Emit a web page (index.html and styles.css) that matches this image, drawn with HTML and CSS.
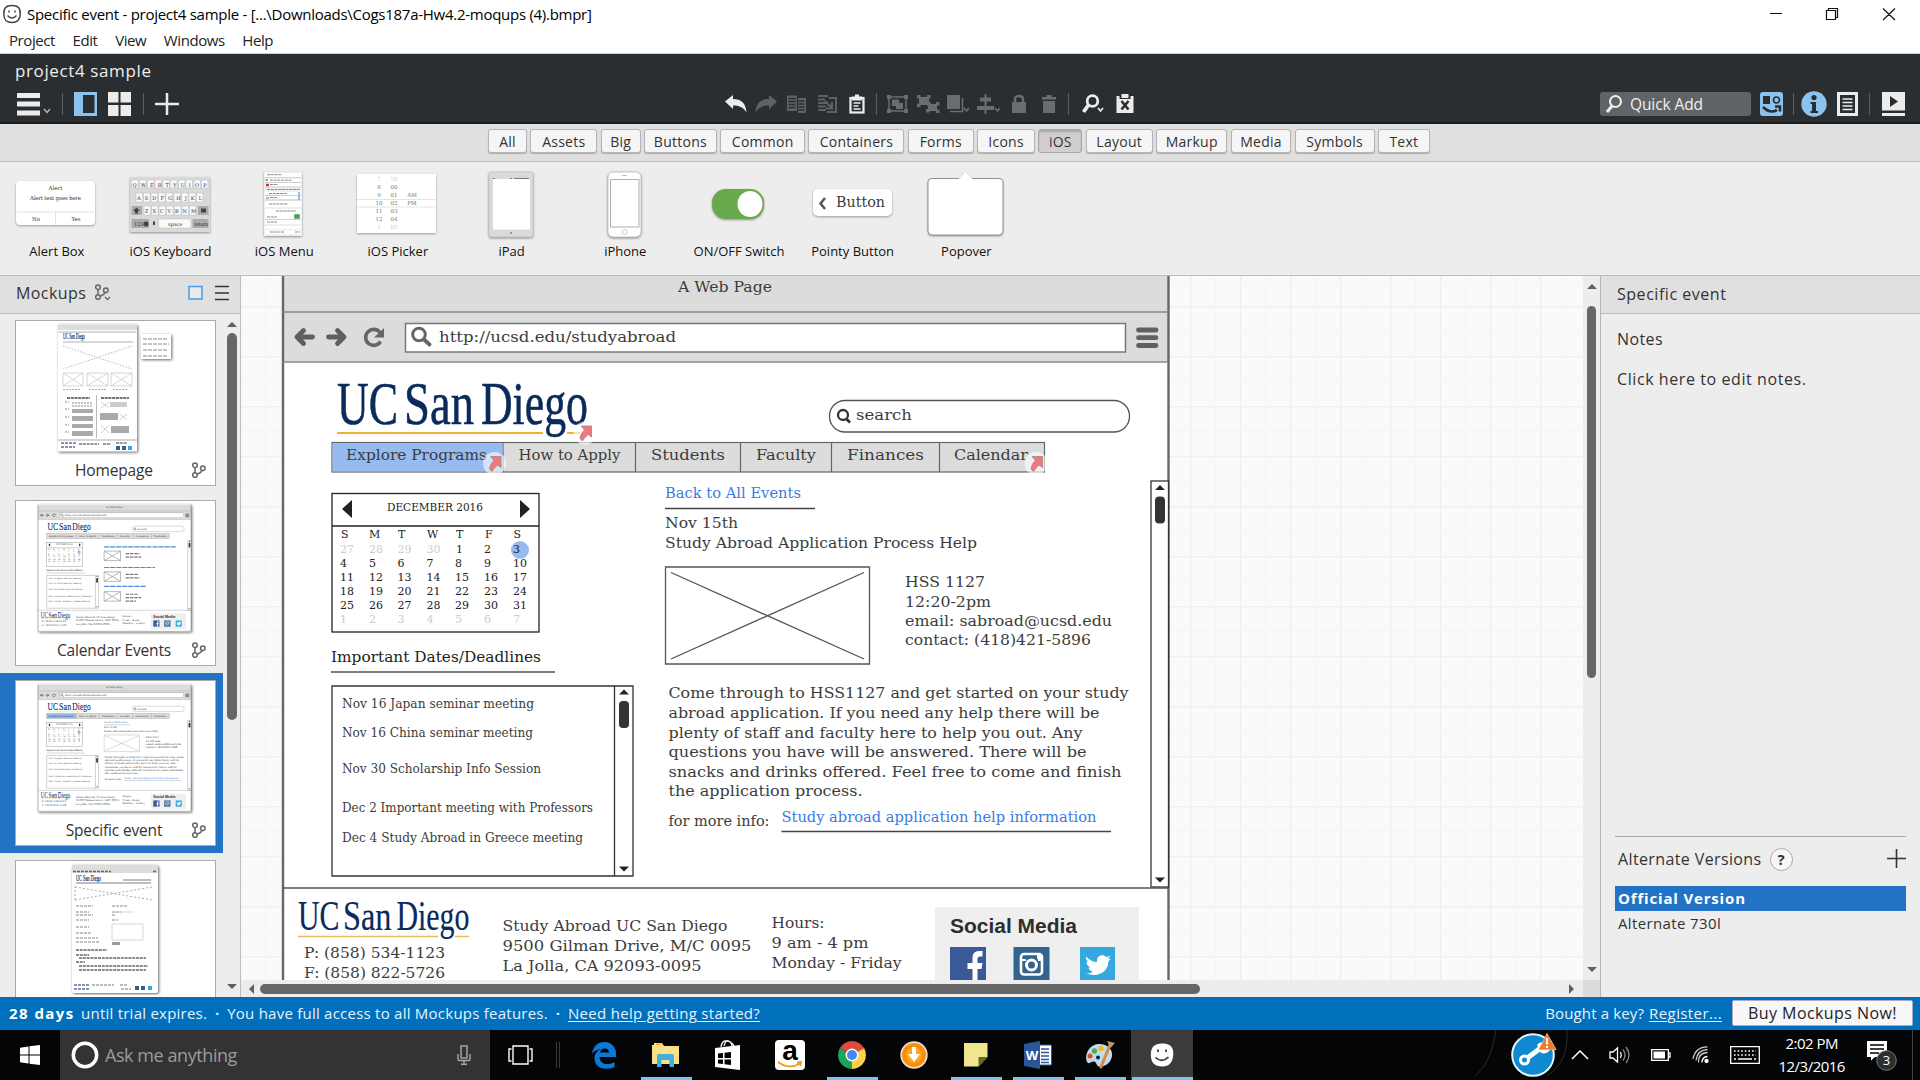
FILE: index.html
```
<!DOCTYPE html>
<html lang="en">
<head>
<meta charset="utf-8">
<title>Specific event - project4 sample</title>
<link rel="stylesheet" href="styles.css">
</head>
<body>
<svg class="defs" width="0" height="0">
  <defs>
    <g id="branch" fill="none" stroke="#666" stroke-width="1.5">
      <circle cx="4" cy="3.2" r="2.3"/><circle cx="4" cy="13" r="2.3"/><circle cx="11.8" cy="6.3" r="2.3"/><path d="M4 5.5v5.2M11 8.600C10 11 8 11.500 6.400 12.200"/>
    </g>
    <g id="hotlink">
      <circle r="11.500" fill="#fff" opacity=".6"/>
      <path d="M-4-7H6.500V4L3 1.500C1 4-1 5 -2.500 8L-5 5.500C-4.500 2-3-1-.5-3Z" fill="#f17878" stroke="#a88" stroke-width=".9"/>
    </g>
    <g id="browser">
      <rect x="282" y="275" width="887" height="736" fill="#fff"/>
      <rect x="282" y="275" width="887" height="87" fill="#dcdcdc"/>
      <path d="M283 275V1010H1168.500V275" fill="none" stroke="#666" stroke-width="2.400"/>
      <path d="M283 312H1168M283 362H1168" stroke="#888" stroke-width="1.600"/>
      <text class="slab" x="678" y="293" textLength="94" lengthAdjust="spacingAndGlyphs">A Web Page</text>
      <g stroke="#5f5f5f" stroke-width="4.800" fill="none" stroke-linecap="round" stroke-linejoin="round">
        <path d="M312.500 337H298M303.500 330.500 297 337 303.500 343.500"/><path d="M328.500 337H343M337.500 330.500 344 337 337.500 343.500"/>
      </g>
      <path d="M380 332.500A8 8 0 1 0 380.500 341.500" fill="none" stroke="#666" stroke-width="3.600"/><path d="M384 328V337.500H374Z" fill="#666"/>
      <rect x="405.500" y="323.500" width="720" height="28.500" fill="#fff" stroke="#777" stroke-width="1.500"/>
      <circle cx="419" cy="334.500" r="6.300" fill="none" stroke="#666" stroke-width="3"/><path d="M424 339.500 429.500 344.500" stroke="#666" stroke-width="3.800" stroke-linecap="round"/>
      <text class="slab" x="439" y="343" textLength="237" lengthAdjust="spacingAndGlyphs">http://ucsd.edu/studyabroad</text>
      <path d="M1138.500 330H1156M1138.500 337.700H1156M1138.500 345.500H1156" stroke="#606060" stroke-width="4.800" stroke-linecap="round"/>
      <g class="logo">
        <text x="337" y="423.500" textLength="61" lengthAdjust="spacingAndGlyphs">UC</text>
        <text x="404" y="423.500" textLength="70" lengthAdjust="spacingAndGlyphs">San</text>
        <text x="481" y="423.500" textLength="107" lengthAdjust="spacingAndGlyphs">Diego</text>
      </g>
      <path d="M337 433H543M567 433H580" stroke="#efb236" stroke-width="2"/>
      <rect x="829.500" y="400.500" width="300" height="31.500" rx="15.500" fill="#fff" stroke="#555" stroke-width="1.300"/>
      <circle cx="843" cy="415" r="5" fill="none" stroke="#333" stroke-width="2.300"/><path d="M846.500 419 850 422.500" stroke="#333" stroke-width="2.800"/>
      <text class="slab" x="856" y="420.500" textLength="56" lengthAdjust="spacingAndGlyphs">search</text>
      <rect x="332" y="442.500" width="712.500" height="29.500" fill="#dcdcdc" stroke="#666" stroke-width="1.200"/>
      <path d="M503 442V472M635.500 442V472M740.500 442V472M831.500 442V472M939.500 442V472" stroke="#666" stroke-width="1.200"/>
      <rect x="332" y="493.500" width="207" height="138.500" fill="#fff" stroke="#222" stroke-width="1.300"/><path d="M332 526H539" stroke="#222" stroke-width="1.300"/>
      <path d="M352 500V518L342 509ZM520 500V518L530 509Z" fill="#222"/>
      <text class="slab cal-title" x="387" y="511.500" textLength="96" lengthAdjust="spacingAndGlyphs">DECEMBER 2016</text>
      <circle cx="520" cy="550" r="9" fill="#95bbf0"/>
      <g class="slab cal">
        <text y="538.500"><tspan x="341">S</tspan><tspan x="369">M</tspan><tspan x="398">T</tspan><tspan x="427">W</tspan><tspan x="456">T</tspan><tspan x="485">F</tspan><tspan x="513.500">S</tspan></text>
        <text y="553.500"><tspan class="off" x="340">27</tspan><tspan class="off" x="369">28</tspan><tspan class="off" x="397.500">29</tspan><tspan class="off" x="426.500">30</tspan><tspan x="456">1</tspan><tspan x="484">2</tspan><tspan x="513">3</tspan></text>
        <text y="567.500"><tspan x="340">4</tspan><tspan x="369">5</tspan><tspan x="397.500">6</tspan><tspan x="426.500">7</tspan><tspan x="455">8</tspan><tspan x="484">9</tspan><tspan x="513">10</tspan></text>
        <text y="581.500"><tspan x="340">11</tspan><tspan x="369">12</tspan><tspan x="397.500">13</tspan><tspan x="426.500">14</tspan><tspan x="455">15</tspan><tspan x="484">16</tspan><tspan x="513">17</tspan></text>
        <text y="595.500"><tspan x="340">18</tspan><tspan x="369">19</tspan><tspan x="397.500">20</tspan><tspan x="426.500">21</tspan><tspan x="455">22</tspan><tspan x="484">23</tspan><tspan x="513">24</tspan></text>
        <text y="609.500"><tspan x="340">25</tspan><tspan x="369">26</tspan><tspan x="397.500">27</tspan><tspan x="426.500">28</tspan><tspan x="455">29</tspan><tspan x="484">30</tspan><tspan x="513">31</tspan></text>
        <text y="624" class="off"><tspan x="340">1</tspan><tspan x="369">2</tspan><tspan x="397.500">3</tspan><tspan x="426.500">4</tspan><tspan x="455">5</tspan><tspan x="484">6</tspan><tspan x="513">7</tspan></text>
      </g>
      <text class="slab dark" x="331" y="662.500" textLength="210" lengthAdjust="spacingAndGlyphs">Important Dates/Deadlines</text>
      <path d="M331 672H555" stroke="#555" stroke-width="1.400"/>
      <path d="M332 686H633V876H332ZM614.500 686V876" fill="#fff" stroke="#333" stroke-width="1.300"/>
      <path d="M619 694.500H629L624 689.500ZM619 866.500H629L624 871.500Z" fill="#222"/><rect x="619" y="701" width="10" height="27" rx="4" fill="#333"/>
      <g class="slab small">
        <text x="342" y="709" textLength="192" lengthAdjust="spacingAndGlyphs">Nov 16 Japan seminar meeting</text>
        <text x="342" y="738" textLength="191" lengthAdjust="spacingAndGlyphs">Nov 16 China seminar meeting</text>
        <text x="342" y="774" textLength="199" lengthAdjust="spacingAndGlyphs">Nov 30 Scholarship Info Session</text>
        <text x="342" y="813" textLength="251" lengthAdjust="spacingAndGlyphs">Dec 2 Important meeting with Professors</text>
        <text x="342" y="843" textLength="241" lengthAdjust="spacingAndGlyphs">Dec 4 Study Abroad in Greece meeting</text>
      </g>
      <rect x="1151" y="481" width="17.500" height="406" fill="#fff" stroke="#333" stroke-width="1.300"/>
      <path d="M1155 490H1165L1160 485ZM1155 877.500H1165L1160 882.500Z" fill="#222"/><rect x="1155" y="496.500" width="10" height="27" rx="4" fill="#333"/>
      <path d="M283 888H1168" stroke="#555" stroke-width="1.400"/>
      <g class="logo logo-small">
        <text x="298" y="930" textLength="41.500" lengthAdjust="spacingAndGlyphs">UC</text>
        <text x="343" y="930" textLength="48.500" lengthAdjust="spacingAndGlyphs">San</text>
        <text x="396.500" y="930" textLength="73" lengthAdjust="spacingAndGlyphs">Diego</text>
      </g>
      <path d="M298 936.500H438M455 936.500H469" stroke="#e3c05c" stroke-width="1.600"/>
      <g class="slab">
        <text x="304" y="959" textLength="141" lengthAdjust="spacingAndGlyphs">P: (858) 534-1123</text>
        <text x="304" y="979" textLength="141" lengthAdjust="spacingAndGlyphs">F: (858) 822-5726</text>
        <text x="502.500" y="931.500" textLength="225" lengthAdjust="spacingAndGlyphs">Study Abroad UC San Diego</text>
        <text x="502.500" y="951.500" textLength="249" lengthAdjust="spacingAndGlyphs">9500 Gilman Drive, M/C 0095</text>
        <text x="502.500" y="971.500" textLength="199" lengthAdjust="spacingAndGlyphs">La Jolla, CA 92093-0095</text>
        <text x="771.500" y="929" textLength="53" lengthAdjust="spacingAndGlyphs">Hours:</text>
        <text x="771.500" y="949" textLength="97" lengthAdjust="spacingAndGlyphs">9 am - 4 pm</text>
        <text x="771.500" y="969" textLength="130" lengthAdjust="spacingAndGlyphs">Monday - Friday</text>
      </g>
      <rect x="935" y="907" width="204" height="91" fill="#efefef"/>
      <text class="social" x="950" y="932.500" textLength="127" lengthAdjust="spacingAndGlyphs">Social Media</text>
      <rect x="950" y="947" width="36" height="36" fill="#3b5998"/><path d="M972.500 983V969H967.500V963H972.500V958Q972.500 951 979 951H982.500V956.500H980Q977.500 956.500 977.500 959V963H982.500L981.500 969H977.500V983Z" fill="#fff"/>
      <rect x="1013.500" y="947" width="36" height="36" fill="#33648f"/><rect x="1021" y="954" width="21" height="20.500" rx="3" fill="none" stroke="#fff" stroke-width="2.600"/><circle cx="1031.500" cy="965" r="5" fill="none" stroke="#fff" stroke-width="3"/><path d="M1022 960H1026M1038 960H1042" stroke="#fff" stroke-width="2"/><rect x="1037" y="955" width="4" height="4" fill="#fff"/>
      <rect x="1080" y="947" width="35" height="36" fill="#35a8e0"/><path d="M1086 956.500C1089 960 1093 962 1097 962C1096 956 1103 953 1106 957C1108 957 1109 956 1110.500 955.500L1108 959 1111 958.500 1108.300 961.500C1108.500 971 1099 978 1086 973.500C1089 973.500 1091.500 973 1093 971.500C1090 971 1089 969.500 1088.500 967.500H1090.500C1087.500 966 1086.500 964 1086.500 961.500L1088.500 962C1086 960 1085.500 958.500 1086 956.500Z" fill="#fff"/>
    </g>
    <g id="nav">
      <text x="346" y="461" textLength="141" lengthAdjust="spacingAndGlyphs">Explore Programs</text>
      <text x="518.500" y="461" textLength="102" lengthAdjust="spacingAndGlyphs">How to Apply</text>
      <text x="651" y="461" textLength="74" lengthAdjust="spacingAndGlyphs">Students</text>
      <text x="756" y="461" textLength="60" lengthAdjust="spacingAndGlyphs">Faculty</text>
      <text x="847" y="461" textLength="77" lengthAdjust="spacingAndGlyphs">Finances</text>
      <text x="954" y="461" textLength="74" lengthAdjust="spacingAndGlyphs">Calendar</text>
    </g>
    <g id="event">
      <rect x="332.600" y="443.100" width="170" height="28.300" fill="#95bbf0"/>
      <use href="#nav" class="slab"/>
      <text class="slab link" x="665" y="499" textLength="136" lengthAdjust="spacingAndGlyphs">Back to All Events</text>
      <path d="M665 508.500H815M781.500 831.500H1111" stroke="#444" stroke-width="1.300"/>
      <g class="slab">
        <text x="665" y="529" textLength="73" lengthAdjust="spacingAndGlyphs">Nov 15th</text>
        <text x="665" y="549" textLength="312" lengthAdjust="spacingAndGlyphs">Study Abroad Application Process Help</text>
        <text x="905" y="588" textLength="80" lengthAdjust="spacingAndGlyphs">HSS 1127</text>
        <text x="905" y="608" textLength="86" lengthAdjust="spacingAndGlyphs">12:20-2pm</text>
        <text x="905" y="627" textLength="207" lengthAdjust="spacingAndGlyphs">email: sabroad@ucsd.edu</text>
        <text x="905" y="646" textLength="186" lengthAdjust="spacingAndGlyphs">contact: (418)421-5896</text>
        <text x="668.500" y="699" textLength="460" lengthAdjust="spacingAndGlyphs">Come through to HSS1127 and get started on your study</text>
        <text x="668.500" y="719" textLength="431" lengthAdjust="spacingAndGlyphs">abroad application. If you need any help there will be</text>
        <text x="668.500" y="739" textLength="414" lengthAdjust="spacingAndGlyphs">plenty of staff and faculty here to help you out. Any</text>
        <text x="668.500" y="758" textLength="418" lengthAdjust="spacingAndGlyphs">questions you have will be answered. There will be</text>
        <text x="668.500" y="778" textLength="453" lengthAdjust="spacingAndGlyphs">snacks and drinks offered. Feel free to come and finish</text>
        <text x="668.500" y="797" textLength="194" lengthAdjust="spacingAndGlyphs">the application process.</text>
        <text x="668.500" y="827" textLength="101" lengthAdjust="spacingAndGlyphs">for more info:</text>
      </g>
      <text class="slab link" x="781.500" y="823" textLength="315" lengthAdjust="spacingAndGlyphs">Study abroad application help information</text>
      <path d="M665.500 567H869.500V664H665.500ZM671 572.500 864 659M671 659 864 572.500" fill="none" stroke="#555" stroke-width="1.300"/>
    </g>
  </defs>
</svg>

<div class="app">
  <header class="titlebar">
    <svg width="20" height="20" viewBox="0 0 20 20" fill="none" stroke="#444" stroke-width="1.500"><path d="M10 1.500C16 1.500 18.500 4 18.300 10 18.100 16 15.500 18.500 10 18.500 4 18.500 2 16 1.800 10 1.600 4 4 1.500 10 1.500Z"/><path d="M5.500 11.500Q10 16.500 14.500 11.500M7 6.500V8.500M13 6.500V8.500"/></svg>
    <span class="window-title">Specific event - project4 sample - [...\Downloads\Cogs187a-Hw4.2-moqups (4).bmpr]</span>
    <svg class="window-buttons" width="136" height="28" viewBox="0 0 136 28" fill="none" stroke="#111" stroke-width="1.200"><path d="M5 13.500H17M61.500 10.500H70.500V19.500H61.500ZM63.500 10V8.500H72.500V17.500H70.500M118 8.500 130 20M130 8.500 118 20"/></svg>
  </header>
  <nav class="menubar"><span>Project</span><span>Edit</span><span>View</span><span>Windows</span><span>Help</span></nav>

  <section class="toolbar">
    <div class="project-name">project4 sample</div>
    <div class="tools">
      <div class="tools-left">
        <svg width="46" height="26" viewBox="0 0 46 26" fill="#ececec"><path d="M1 2H24V7H1ZM1 10.500H24V15.500H1ZM1 19.500H24V24.500H1Z"/><path d="M28 18 31 21.500 34 18" fill="none" stroke="#bbb" stroke-width="1.300"/></svg>
        <i class="sep"></i>
        <svg width="23" height="24" viewBox="0 0 23 24"><path d="M0 0H23V24H0Z" fill="#8cc2ee"/><path d="M9 3H20.500V21H9Z" fill="#2a2e30"/></svg>
        <svg width="24" height="24" viewBox="0 0 24 24" fill="#ececec"><path d="M0 0H10.500V10.500H0ZM12.500 0H23V10.500H12.500ZM0 13H10.500V24H0ZM12.500 13H23V24H12.500Z"/></svg>
        <i class="sep"></i>
        <svg width="24" height="24" viewBox="0 0 24 24" stroke="#ececec" stroke-width="2.500"><path d="M12 1V23M0 12H24"/></svg>
      </div>
      <div class="tools-edit">
        <span class="tool"><svg width="24" height="20" viewBox="0 0 24 20" fill="#ececec"><path d="M1 7.500 9 1V5C17 5 22 9 22.500 18.500 19 13 15 11.500 9 11.500V15Z"/></svg></span>
        <span class="tool"><svg width="24" height="20" viewBox="0 0 24 20" fill="#5f6263"><path d="M23 7.500 15 1V5C7 5 2 9 1.500 18.500 5 13 9 11.500 15 11.500V15Z"/></svg></span>
        <span class="tool"><svg width="21" height="20" viewBox="0 0 21 20"><path d="M1 1.500H11V17H1Z M11 4H20V19H11Z" fill="#5f6263"/><path d="M2.500 4.500H9.500M2.500 7.500H9.500M2.500 10.500H9.500M2.500 13.500H9.500M12.500 7H18.500M12.500 10H18.500M12.500 13H18.500M12.500 16H18.500M11.500 2V19" stroke="#2a2e30" stroke-width="1.300"/></svg></span>
        <span class="tool"><svg width="21" height="20" viewBox="0 0 21 20" fill="none" stroke="#5f6263" stroke-width="2"><path d="M1 2H11M1 5.500H8M1 9H9M1 12.500H9M1 16H9M12 4H19V18H10M8 7 15 14M15 8V14.500H9"/></svg></span>
        <span class="tool"><svg width="18" height="20" viewBox="0 0 18 20" fill="none" stroke="#ececec"><rect x="2.500" y="4" width="13" height="14.500" stroke-width="2.200"/><path d="M5 3.500H13V5.500H5ZM7 1.500H11" stroke-width="2"/><path d="M5.500 9H12.500M5.500 12H10.500M5.500 15H12.500" stroke-width="1.500"/></svg></span>
        <i class="sep"></i>
        <span class="tool"><svg width="23" height="20" viewBox="0 0 23 20" fill="#6a6d6e"><path d="M1 1H5V5H1ZM18 1H22V5H18ZM1 15H5V19H1ZM18 15H22V19H18Z"/><path d="M3 3H20V17H3Z" fill="none" stroke="#6a6d6e" stroke-width="1.500"/><path d="M6 5.500H13V12H6ZM10 9H17V15H10Z"/></svg></span>
        <span class="tool"><svg width="24" height="20" viewBox="0 0 24 20" fill="#6a6d6e"><path d="M3 3H13V11H3ZM12 10H21V17H12Z"/><path d="M1 1H4.500V4.500H1ZM11 1H14.500V4.500H11ZM1 9.500H4.500V13H1ZM11 8H14.500V12H11ZM20 8H23.500V11.500H20ZM20 15.500H23.500V19H20ZM10 15H13.500V18.500H10Z"/></svg></span>
        <span class="tool"><svg width="26" height="20" viewBox="0 0 26 20" fill="#6a6d6e"><path d="M2 1H15V15H2Z"/><path d="M17.500 4V17.500H5M19 14 21.500 17 24 14" fill="none" stroke="#6a6d6e" stroke-width="1.600"/></svg></span>
        <span class="tool"><svg width="26" height="20" viewBox="0 0 26 20" fill="#6a6d6e"><path d="M8.500 0H10.500V20H8.500ZM4 3.500H15V7.500H4ZM1 12H18V16H1Z"/><path d="M19 14 21.500 17 24 14" fill="none" stroke="#6a6d6e" stroke-width="1.600"/></svg></span>
        <span class="tool"><svg width="16" height="20" viewBox="0 0 16 20" fill="#6a6d6e"><path d="M1 8H15V19H1Z"/><path d="M4 9V5Q4 2 8 2 12 2 12 5V9" fill="none" stroke="#6a6d6e" stroke-width="2.500"/></svg></span>
        <span class="tool"><svg width="16" height="20" viewBox="0 0 16 20" fill="#6a6d6e"><path d="M1 3H5.500V1H10.500V3H15V5.500H1ZM2 7H14V19H2Z"/></svg></span>
        <i class="sep"></i>
        <span class="tool tool-search"><svg width="24" height="20" viewBox="0 0 24 20" fill="none" stroke="#ececec"><circle cx="11.500" cy="7" r="5.300" stroke-width="2.800"/><path d="M7.500 11 2.500 18" stroke-width="3.800"/><path d="M17 14 19.500 17 22 14" stroke-width="1.600"/></svg></span>
        <span class="tool tool-clear"><svg width="20" height="20" viewBox="0 0 20 20"><path d="M1.500 2H18.500V19H1.500Z" fill="#ececec"/><path d="M4.500 0H15.500V5H4.500Z" fill="#2a2e30"/><path d="M6.500 0H13.500V4H6.500Z" fill="#ececec"/><path d="M6.500 7 13.500 15.500M13.500 7 6.500 15.500" stroke="#2a2e30" stroke-width="2.600"/></svg></span>
      </div>
      <div class="tools-right">
        <div class="quick-add"><svg width="18" height="20" viewBox="0 0 18 20" fill="none" stroke="#f0f0f0"><circle cx="10.500" cy="7.500" r="5.500" stroke-width="2"/><path d="M7 12 2 18" stroke-width="3"/></svg><span>Quick Add</span></div>
        <svg class="ui-library" width="23" height="24" viewBox="0 0 23 24"><rect width="23" height="24" rx="3" fill="#8cc2ee"/><path d="M3 4H10V12H3Z" fill="#2a2e30"/><circle cx="16.500" cy="8" r="3" fill="none" stroke="#2a2e30" stroke-width="1.600"/><path d="M3 15Q10 22 17 18M15 14.500H20V19.500" fill="none" stroke="#2a2e30" stroke-width="2.600"/></svg>
        <i class="sep"></i>
        <svg width="26" height="26" viewBox="0 0 26 26"><circle cx="13" cy="13" r="12.700" fill="#8cc2ee"/><circle cx="13" cy="6.500" r="2.600" fill="#2a2e30"/><path d="M9.500 11H15V20H17V22H9.500V20H11V13H9.500Z" fill="#2a2e30"/></svg>
        <svg class="notes-icon" width="22" height="24" viewBox="0 0 22 24"><path d="M0 0H21V24H0Z" fill="#ececec"/><path d="M3 3H18V21H3Z" fill="#2a2e30"/><path d="M5.500 7H15.500M5.500 10.500H15.500M5.500 14H15.500M5.500 17.500H15.500" stroke="#ececec" stroke-width="1.700"/></svg>
        <i class="sep"></i>
        <svg width="23" height="24" viewBox="0 0 23 24"><path d="M0 0H23V18.500H0ZM0 21H23V24H0Z" fill="#ececec"/><path d="M8 4V15L16 9.500Z" fill="#2a2e30"/></svg>
      </div>
    </div>
  </section>

  <nav class="tabs">
    <button class="tab w-all">All</button><button class="tab w-assets">Assets</button><button class="tab w-big">Big</button><button class="tab w-buttons">Buttons</button><button class="tab w-common">Common</button><button class="tab w-containers">Containers</button><button class="tab w-forms">Forms</button><button class="tab w-icons">Icons</button><button class="tab w-ios active">iOS</button><button class="tab w-layout">Layout</button><button class="tab w-markup">Markup</button><button class="tab w-media">Media</button><button class="tab w-symbols">Symbols</button><button class="tab w-text">Text</button>
  </nav>

  <section class="library">
    <figure><svg width="82" height="74" viewBox="0 0 82 74"><rect class="soft" x="1" y="13" width="79" height="44" rx="4"/><path d="M2 44H79M40.500 44V57" stroke="#e2e2e2"/><g class="micro" text-anchor="middle"><text x="40.500" y="21.500">Alert</text><text x="40.500" y="32" textLength="51">Alert text goes here</text><text x="21" y="53">No</text><text x="61" y="53">Yes</text></g></svg><figcaption>Alert Box</figcaption></figure>
    <figure><svg width="82" height="74" viewBox="0 0 82 74"><rect x="1" y="9" width="80" height="55" fill="#d9d9d9" class="lift"/><g fill="#fafafa" stroke="#bbb" stroke-width=".5"><path d="M2.500 12h6.500v8h-6.500zM10.500 12h6.500v8h-6.500zM18.500 12h6.500v8h-6.500zM26 12h6.500v8h-6.500zM34 12h6.500v8h-6.500zM41.500 12h6.500v8h-6.500zM49.500 12h6.500v8h-6.500zM57 12h6.500v8h-6.500zM65 12h6.500v8h-6.500zM72.500 12h6.500v8h-6.500zM7 25h6.500v9h-6.500zM14.500 25h6.500v9h-6.500zM22 25h6.500v9h-6.500zM29.500 25h6.500v9h-6.500zM37 25h6.500v9h-6.500zM45 25h6.500v9h-6.500zM52.500 25h6.500v9h-6.500zM60 25h6.500v9h-6.500zM67.500 25h6.500v9h-6.500zM15 38h6.500v9h-6.500zM22.500 38h6.500v9h-6.500zM30 38h6.500v9h-6.500zM37.500 38h6.500v9h-6.500zM45.500 38h6.500v9h-6.500zM53 38h6.500v9h-6.500zM60.500 38h6.500v9h-6.500zM29.500 51H62V60H29.500Z"/></g><path d="M2.500 38H13V47H2.500ZM69 38H79.500V47H69ZM2.500 51H20V60H2.500ZM63.500 51H79.500V60H63.500Z" fill="#aaa"/><g class="micro key"><text x="3.500" y="18.500" textLength="74">QWERTYUIOP</text><text x="8" y="31.500" textLength="65">ASDFGHJKL</text><text x="16" y="44.500" textLength="51">ZXCVBNM</text><text x="5" y="57.500">123</text><text x="39" y="57.500">space</text><text x="65" y="57.500" textLength="14">return</text></g><path d="M7.500 39.500 11 43H9V45.500H6V43H4ZM72 40.500H77V44.500H72Z" fill="#444"/><circle cx="17" cy="56" r="2.500" fill="#444"/><path d="M24 53.500H26V57H24Z" fill="#444"/></svg><figcaption>iOS Keyboard</figcaption></figure>
    <figure><svg width="82" height="74" viewBox="0 0 82 74"><rect x="22" y="4" width="38" height="64" fill="#f0f0f0" class="lift"/><path d="M23 5H59V9H23ZM23 10.500H59V14H23ZM23 15H59V18.500H23ZM23 24H59V27H23ZM23 28H59V31H23ZM23 33H59V39H23ZM23 41H59V56H23ZM23 58H59V61H23ZM23 62.500H59V66H23Z" fill="#fff"/><path d="M25 6.700H40M28 12.200H50M28 16.500H36M25 21.500H58M27 25.500H45M28 29.500H36M27 36H46M34 43H54M25 49H35M25 54H35M28 64H42M53 64H58" stroke="#888" stroke-width="1" stroke-dasharray="3 .7"/><path d="M23.500 12H26M53 47H57V50H53Z" stroke="#40a050" fill="#58a050" stroke-width="1.500"/><path d="M24 17H27" stroke="#d03030" stroke-width="2.500"/><path d="M24 30H27M57 24V32" stroke="#2878c8" stroke-width="1"/><path d="M23 9.700H59M23 14.500H59M23 19H59M23 27.500H59M23 32H59M23 51.500H59" stroke="#bbb" stroke-width=".7"/></svg><figcaption>iOS Menu</figcaption></figure>
    <figure><svg width="82" height="74" viewBox="0 0 82 74"><rect x="1" y="6" width="79" height="59" class="soft"/><path d="M1 31.500H80M1 39H80" stroke="#ddd" stroke-width=".8"/><g class="micro picker" text-anchor="middle"><text x="23" y="21">8</text><text x="38" y="21">00</text><text x="23" y="29">9</text><text x="38" y="29">01</text><text x="56" y="29">AM</text><text x="23" y="37">10</text><text x="38" y="37">02</text><text x="56" y="37">PM</text><text x="23" y="45">11</text><text x="38" y="45">03</text><text x="23" y="53">12</text><text x="38" y="53">04</text><g opacity=".4"><text x="23" y="61">1</text><text x="38" y="61">05</text><text x="23" y="13">7</text><text x="38" y="13">59</text></g></g></svg><figcaption>iOS Picker</figcaption></figure>
    <figure><svg width="82" height="74" viewBox="0 0 82 74"><rect x="19" y="4" width="44" height="65" rx="2" fill="#dadada" stroke="#c4c4c4" stroke-width=".7" class="lift"/><path d="M23 11H60V61.500H23Z" fill="#fff"/><path d="M23 10.500H60" stroke="#777" stroke-dasharray="2 15 2"/><circle cx="41" cy="65" r="1" fill="#888"/></svg><figcaption>iPad</figcaption></figure>
    <figure><svg width="82" height="74" viewBox="0 0 82 74"><rect x="25" y="4" width="33" height="65" rx="5" fill="#fff" stroke="#bbb" stroke-width=".8" class="lift"/><path d="M27.500 11.500H56V59H27.500Z" fill="#fff" stroke="#999" stroke-width=".8"/><circle cx="41.500" cy="64" r="2.500" fill="none" stroke="#ccc"/><path d="M39 7.500H44" stroke="#bbb"/></svg><figcaption>iPhone</figcaption></figure>
    <figure><svg width="82" height="74" viewBox="0 0 82 74"><rect x="15" y="21" width="52" height="30" rx="14" fill="#69a94e" class="lift"/><ellipse cx="53" cy="36" rx="12.500" ry="13" fill="#fff"/></svg><figcaption>ON/OFF Switch</figcaption></figure>
    <figure><svg width="82" height="74" viewBox="0 0 82 74"><rect x="2" y="21" width="79" height="27" rx="5" class="soft"/><path d="M14 30 9.500 35.500 14 41" fill="none" stroke="#555" stroke-width="2.500"/><text class="slab pointy" x="25" y="39.500" textLength="49" lengthAdjust="spacingAndGlyphs">Button</text></svg><figcaption>Pointy Button</figcaption></figure>
    <figure><svg width="82" height="74" viewBox="0 0 82 74"><g transform="translate(1)"><path d="M7 10.500H34L40.500 4 47 10.500H74Q78 10.500 78 14V63Q78 67 74 67H7Q3 67 3 63V14Q3 10.500 7 10.500Z" fill="#fff" class="lift"/><path d="M34 10.500H7Q3 10.500 3 14V63Q3 67 7 67H74Q78 67 78 63V14Q78 10.500 74 10.500H47" fill="none" stroke="#888" stroke-width=".9"/></g></svg><figcaption>Popover</figcaption></figure>
  </section>

  <main class="workspace">
    <aside class="mockups">
      <div class="mockups-head"><span>Mockups</span>
        <svg width="18" height="18" viewBox="0 0 18 18"><use href="#branch"/><path d="M11 13 13.500 15.500 16 13" fill="none" stroke="#666" stroke-width="1.300"/></svg>
        <svg class="view-icons" width="42" height="18" viewBox="0 0 42 18" fill="none"><path d="M2 2.500H15V15H2Z" fill="#e6ebf0" stroke="#4a9be0" stroke-width="1.500"/><path d="M28 2.500H42M28 9H42M28 15.500H42" stroke="#333" stroke-width="1.500"/></svg>
      </div>
      <div class="mockups-body">
        <div class="card-list">
          <div class="slot"><div class="card">
            <svg class="thumb" width="199" height="134" viewBox="1 0 199 134">
              <rect x="43" y="3.500" width="79" height="127" fill="#fff" class="lift2"/><path d="M43 3.500H122V9H43Z" fill="#ddd"/><path d="M43.500 11H121M48 21H118" stroke="#ccc" stroke-width="1.500"/>
              <text class="logo tiny-logo" x="48" y="18" textLength="22" lengthAdjust="spacingAndGlyphs">UC San Diego</text>
              <path d="M48 25 117 48M117 25 48 48" stroke="#bbb" stroke-dasharray="1.500 1.500" fill="none"/>
              <path d="M48 52H68V65H48ZM72 52H93V65H72ZM96 52H117V65H96ZM48 52 68 65M68 52 48 65M72 52 93 65M93 52 72 65M96 52 117 65M117 52 96 65" fill="none" stroke="#ccc" stroke-width=".8"/>
              <path d="M48 68.500H66M74 68.500H91M98 68.500H112" stroke="#aaa" stroke-dasharray="2 1"/><path d="M52 77H75M86 77H114" stroke="#444" stroke-width="1.500" stroke-dasharray="3 .7"/><path d="M81.500 74V117" stroke="#bbb"/>
              <path d="M50 81H54M50 88H54M50 96H54M50 104H54M50 111H54M57 82H77M57 85H77" stroke="#888" stroke-dasharray="2 1"/><path d="M57 88H78V92H57ZM57 95H78V100H57ZM57 103H78V107H57ZM57 110H78V115H57ZM85 92H103V99H85ZM96 105H114V112H96Z" fill="#aaa"/><path d="M95 81H112V86H95Z" fill="#ccc"/><path d="M86 81 94 87M94 81 86 87M105 93 112 99M112 93 105 99M86 104 94 112M94 104 86 112" stroke="#bbb" stroke-width=".7"/>
              <path d="M43 119H122" stroke="#888" stroke-width=".7"/><path d="M46 122H61M46 126H60" stroke="#5b70a0" stroke-width="1.500" stroke-dasharray="3 1"/><path d="M64 123H84M88 123H96M101 122H112" stroke="#777" stroke-width="1.600" stroke-dasharray="3 .8"/><path d="M101 125H105V129H101Z" fill="#3b5998"/><path d="M107 125H111V129H107Z" fill="#33648f"/><path d="M113 125H117V129H113Z" fill="#35a8e0"/>
              <rect x="126" y="13" width="30" height="25" fill="#fff" class="lift2"/><path d="M128 18H152M128 23H154M128 29H152M128 35H153" stroke="#888" stroke-dasharray="4 1"/>
            </svg>
            <div class="card-label"><span>Homepage</span><svg width="16" height="17" viewBox="0 0 16 17"><use href="#branch"/></svg></div>
          </div></div>
          <div class="slot"><div class="card">
            <svg class="thumb" width="199" height="134" viewBox="1 0 199 134">
              <rect x="23" y="3.500" width="153" height="127" fill="#fff" class="lift2"/>
              <g transform="translate(-25.600 -43.900) scale(.1725)"><use href="#browser"/><use href="#nav" class="slab"/><g stroke="#4a88dc" stroke-width="7" stroke-dasharray="30 5"><path d="M665 520H1080M665 640H960M665 750H905"/></g><path d="M665 545H760V600H665ZL760 600M760 545 665 600M665 665H760V720H665ZL760 720M760 665 665 720M665 780H760V835H665ZL760 835M760 780 665 835" fill="none" stroke="#999" stroke-width="4"/><path d="M790 560H870M790 580H880M790 680H860M790 700H870M790 795H860M790 815H880M790 835H850" stroke="#777" stroke-width="7" stroke-dasharray="20 5"/></g>
            </svg>
            <div class="card-label"><span>Calendar Events</span><svg width="16" height="17" viewBox="0 0 16 17"><use href="#branch"/></svg></div>
          </div></div>
          <div class="slot selected"><div class="card">
            <svg class="thumb" width="199" height="134" viewBox="1 0 199 134">
              <rect x="23" y="3.500" width="153" height="127" fill="#fff" class="lift2"/>
              <g transform="translate(-25.600 -43.900) scale(.1725)"><use href="#browser"/><use href="#event"/></g>
            </svg>
            <div class="card-label"><span>Specific event</span><svg width="16" height="17" viewBox="0 0 16 17"><use href="#branch"/></svg></div>
          </div></div>
          <div class="slot"><div class="card">
            <svg class="thumb" width="199" height="134" viewBox="1 0 199 134">
              <rect x="57" y="4" width="86" height="128" rx="2" fill="#fff" class="lift2"/><path d="M57 4H143V12H57Z" fill="#ddd"/><path d="M58 10.500H96M138 10.500H141" stroke="#666" stroke-width="1.500" stroke-dasharray="3 1"/>
              <text class="logo tiny-logo" x="61" y="19.500" textLength="25" lengthAdjust="spacingAndGlyphs">UC San Diego</text><path d="M61 22H136M108 19H136" stroke="#aaa" stroke-width="1.500"/>
              <path d="M60 25V39M60 26 137 39M137 26 60 39" stroke="#aaa" stroke-dasharray="2 2" fill="none"/>
              <path d="M61 45H78M61 51H74M61 54H78M61 59H74M61 66H74M61 72H76M61 77H83M61 81H85M97 45H112M97 51H106M97 54H101M97 59H103" stroke="#888" stroke-width="1.200" stroke-dasharray="3 1"/><path d="M97 63H128V79H97ZM97 51H119" fill="none" stroke="#ccc" stroke-width=".8"/><path d="M97 81H105V84H97Z" fill="#999"/>
              <path d="M61 89H92M61 94H74M64 97H131M61 101H70M64 105H133M64 109H131" stroke="#666" stroke-width="1.400" stroke-dasharray="3 .8"/>
              <path d="M59 124H75M59 128H74" stroke="#5b70a0" stroke-width="1.500" stroke-dasharray="3 1"/><path d="M77 124H99M105 124H112M106 128H116" stroke="#777" stroke-dasharray="3 1"/><path d="M120 125H124V129H120Z" fill="#3b5998"/><path d="M126 125H130V129H126Z" fill="#33648f"/><path d="M133 125H137V129H133Z" fill="#35a8e0"/>
            </svg>
          </div></div>
        </div>
        <div class="vscroll"><i class="arrow up"></i><i class="bar bar-mockups"></i><i class="arrow down"></i></div>
      </div>
    </aside>

    <section class="canvas">
      <div class="canvas-top">
        <svg class="board" width="1342" height="704" viewBox="241 276 1342 704">
          <defs>
            <pattern id="grid" x="240" y="306" width="50" height="50" patternUnits="userSpaceOnUse"><path d="M0 .5H50M.5 0V50" stroke="#efefef" stroke-width="1.600"/><path d="M0 25.500H50M25.500 0V50" stroke="#f5f5f5"/></pattern>
          </defs>
          <rect x="241" y="276" width="1342" height="704" fill="#fafafa"/><rect x="241" y="276" width="1342" height="704" fill="url(#grid)"/>
          <use href="#browser"/><use href="#event"/>
          <use href="#hotlink" x="585" y="433"/><use href="#hotlink" x="494.500" y="463.500"/><use href="#hotlink" x="1036" y="463.500"/>
        </svg>
        <div class="vscroll"><i class="arrow up"></i><i class="bar bar-canvas"></i><i class="arrow down"></i></div>
      </div>
      <div class="hscroll"><i class="arrow left"></i><i class="bar bar-h"></i><i class="arrow right"></i><i class="corner"></i></div>
    </section>

    <aside class="inspector">
      <h2>Specific event</h2>
      <div class="notes"><h3>Notes</h3><p>Click here to edit notes.</p></div>
      <div class="versions">
        <div class="versions-head"><span>Alternate Versions</span><b>?</b><svg width="19" height="20" viewBox="0 0 19 20" stroke="#333" stroke-width="1.600"><path d="M9.500 0V19M0 9.500H19"/></svg></div>
        <div class="version current">Official Version</div>
        <div class="version">Alternate 730l</div>
      </div>
    </aside>
  </main>

  <footer class="trial">
    <b>28 days</b><span class="t-until">until trial expires.</span><span class="dot">·</span><span class="t-access">You have full access to all Mockups features.</span><span class="dot">·</span><u class="t-help">Need help getting started?</u>
    <span class="t-key">Bought a key?</span><u class="t-register">Register...</u><button class="buy">Buy Mockups Now!</button>
  </footer>

  <footer class="taskbar">
    <div class="start"><svg width="20" height="20" viewBox="0 0 20 20" fill="#fff"><path d="M0 2.800 8.500 1.500V9.500H0ZM9.500 1.300 20 0V9.500H9.500ZM0 10.500H8.500V18.500L0 17.200ZM9.500 10.500H20V20L9.500 18.700Z"/></svg></div>
    <div class="search"><svg width="28" height="28" viewBox="0 0 28 28"><circle cx="14" cy="14" r="11.700" fill="none" stroke="#fff" stroke-width="3.500"/></svg><span>Ask me anything</span><svg class="mic" width="14" height="20" viewBox="0 0 14 20" fill="none" stroke="#aaa" stroke-width="1.400"><rect x="4" y="1" width="6" height="12"/><path d="M1 9V14Q1 15.500 2.500 15.500H11.500Q13 15.500 13 14V9M7 15.500V19.500M4 19.300H10"/></svg></div>
    <div class="taskview"><svg width="26" height="20" viewBox="0 0 26 20" fill="none" stroke="#fff" stroke-width="1.400"><path d="M5 1H20V19H5ZM3.500 4H1V16H3.500M21.500 4H24V16H21.500"/></svg></div>
    <i class="grip"></i>
    <div class="task"><svg width="28" height="28" viewBox="0 0 28 28"><path d="M2 13C3 5 8 1 14.500 1 22 1 26 7 26 12V16H9.500C10 24 19 24.500 24.500 21V26C18 29 5 29 4.500 17.500 4.500 13 7 9.500 11 8 6.500 8.500 3.500 10.500 2 13ZM10 11.500H19C19 6 11 6 10 11.500Z" fill="#0a7ad8" fill-rule="evenodd"/></svg></div>
    <div class="task open"><svg width="30" height="26" viewBox="0 0 30 26"><path d="M1 3H3V1H11L13 4H28V22H1Z" fill="#fbe08a"/><path d="M5 1.500H10V3H5Z" fill="#f3b73c"/><path d="M6 14Q6 12 8 12H21Q23 12 23 14V25H18.500V18H10.500V25H6Z" fill="#45aee0"/></svg></div>
    <div class="task"><svg width="28" height="32" viewBox="0 0 28 32"><path d="M1 9 26 6V31L1 28Z" fill="#fff"/><path d="M7 8Q8 1 13 2 18 2 18 8M10 7Q12-1 16 3 20 5 20 8" fill="none" stroke="#fff" stroke-width="1.300"/><path d="M4 14.500 9 14V19H4ZM10.500 13.800 17 13V19H10.500ZM4 20.500H9V25L4 24.500ZM10.500 20.500H17V26L10.500 25.200Z" fill="#000"/></svg></div>
    <div class="task"><svg class="amazon" width="30" height="30" viewBox="0 0 30 30"><rect width="30" height="30" rx="4" fill="#fff"/><text class="amz" x="15" y="20" text-anchor="middle">a</text><path d="M3 22Q14 30 25 23.500M22 22.500 26 22 25.500 26" fill="none" stroke="#f59a1c" stroke-width="1.800"/></svg></div>
    <div class="task open"><svg width="28" height="28" viewBox="0 0 28 28"><path d="M14 14 1.900 7A14 14 0 0 1 26.100 7Z" fill="#e04a3a"/><path d="M14 14 14 28A14 14 0 0 1 1.900 7Z" fill="#1fa35c"/><path d="M14 14 26.100 7A14 14 0 0 1 14 28Z" fill="#fdd04a"/><path d="M14 7.500H26.300L26 7 14 4Z" fill="#e04a3a"/><circle cx="14" cy="14" r="6.500" fill="#fff"/><circle cx="14" cy="14" r="5" fill="#4688f1"/></svg></div>
    <div class="task"><svg width="28" height="28" viewBox="0 0 28 28"><circle cx="14" cy="14" r="12.800" fill="#f5900f" stroke="#f3dccb" stroke-width="1.800"/><circle cx="14" cy="14" r="8" fill="#ffb01e" opacity=".7"/><path d="M12 6H16V13H20L14 21 8 13H12Z" fill="#fff"/></svg></div>
    <div class="task open"><svg width="24" height="24" viewBox="0 0 24 24"><path d="M0 0H23.500V14L14.500 23.500H0Z" fill="#f1e58f"/><path d="M23.500 14H14.500V23.500Z" fill="#6b6530"/></svg></div>
    <div class="task open"><svg width="28" height="28" viewBox="0 0 28 28"><path d="M14 4H27.500V24H14Z" fill="#fff" stroke="#2b579a"/><path d="M17 8H25M17 11.500H25M17 15H25M17 18.500H25M17 21.500H25" stroke="#2b579a" stroke-width="1.300"/><path d="M0 3 16 0V28L0 25Z" fill="#2b579a"/><text class="word" x="8" y="19" text-anchor="middle">W</text></svg></div>
    <div class="task open"><svg width="32" height="30" viewBox="0 0 32 30"><path d="M15 4C24 4 29 10 28 16 27 23 21 27 15 26.500 12 26 13 22 10 21.500 7 21 5 25 3 22 0 14 6 4 15 4Z" fill="#bfdcee"/><circle cx="6" cy="16" r="2.500" fill="#dc4a30"/><circle cx="10.500" cy="11" r="2.700" fill="#51ae45"/><circle cx="17" cy="8.500" r="2.700" fill="#f0b92c"/><circle cx="14" cy="17.500" r="2" fill="#123"/><path d="M26 5 17 27" stroke="#d98a3c" stroke-width="3" stroke-linecap="round"/><path d="M23 1 31 3 26.500 8Z" fill="#c9986a"/></svg></div>
    <div class="task open focused"><svg width="24" height="24" viewBox="0 0 24 24"><path d="M12 .5C19 .5 23.500 3 23.300 11 23 19 19.500 23.500 12 23.500 5 23.500 1 20 .8 12 .6 4 5 .5 12 .5Z" fill="#fff"/><path d="M5.500 14.500Q12 20.500 18.500 14M8 6.500V9M16 6.500V9" fill="none" stroke="#333" stroke-width="1.700"/></svg></div>
    <div class="tray">
      <div class="tr-tool"><svg width="80" height="50" viewBox="0 0 80 50"><path d="M-9 0Q-14 34 -30 46M62 0Q64 32 42 46" fill="none" stroke="#2c2c2c"/><circle cx="28" cy="25" r="20.800" fill="#0f8ad0" stroke="#e8f4fb" stroke-width="2"/><path d="M21 29 37 17" stroke="#fff" stroke-width="5"/><circle cx="19.500" cy="30" r="4" fill="#0f8ad0" stroke="#fff" stroke-width="3"/><path d="M32 15Q36 10 41 13V18L46 18Q43 25 36 23Z" fill="#fff"/><path d="M42 3.500 51 19.500H34Z" fill="#ee7a30" stroke="#f3a36e"/><path d="M42 8V14.500M42 16V18" stroke="#fff" stroke-width="2"/></svg></div>
      <div class="tr"><svg width="18" height="10" viewBox="0 0 18 10" fill="none" stroke="#fff" stroke-width="1.500"><path d="M1 9 9 1 17 9"/></svg></div>
      <div class="tr"><svg width="22" height="20" viewBox="0 0 22 20" fill="none" stroke="#fff" stroke-width="1.300"><path d="M1 7H4L8.500 3V17L4 13H1Z"/><path d="M11.500 7Q13 10 11.500 13"/><path d="M14 4.500Q18 10 14 15.500M17 2Q23 10 17 18" stroke="#888"/></svg></div>
      <div class="tr"><svg width="20" height="12" viewBox="0 0 20 12"><path d="M.7.700H17.300V11.300H.7ZM17.300 4H19V8H17.300" fill="none" stroke="#fff" stroke-width="1.300"/><path d="M2.500 2.500H14V9.500H2.500Z" fill="#fff"/></svg></div>
      <div class="tr"><svg width="18" height="18" viewBox="0 0 18 18" fill="none" stroke="#fff" stroke-width="1.300"><circle cx="14.500" cy="15" r="1.500" fill="#fff"/><path d="M10 16.500Q10 11 15.500 10.500"/><path d="M6.500 16.500Q6 7 15.500 6.500M4 14.500Q5 4 15.500 3.500M1 13Q3 1 15.500 .8" stroke="#ccc"/></svg></div>
      <div class="tr tr-kbd"><svg width="30" height="18" viewBox="0 0 30 18" fill="none" stroke="#fff"><path d="M.7.700H29.300V17.300H.7Z" stroke-width="1.300"/><path d="M4 5H26M4 9H26" stroke-width="1.500" stroke-dasharray="1.600 2"/><path d="M4 13H6M8 13H22M24 13H26" stroke-width="1.500"/></svg></div>
      <div class="clock"><span>2:02 PM</span><span>12/3/2016</span></div>
      <div class="tr tr-note"><svg width="34" height="34" viewBox="0 0 34 34"><path d="M1 3H21V19H9L5 22.500V19H1Z" fill="#fff"/><path d="M4 7H18M4 11H18M4 15H13" stroke="#000" stroke-width="1.400"/><circle cx="20.500" cy="22.500" r="9.800" fill="#2e2e2e" stroke="#777"/><text class="badge" x="20.500" y="27" text-anchor="middle">3</text></svg></div>
    </div>
  </footer>
</div>
</body>
</html>
```
FILE: styles.css
```
* { box-sizing: border-box; }
body { margin: 0; background: #fff; font-family: "Open Sans", sans-serif; color: #333; }
svg { display: block; flex: none; }
.defs { position: absolute; }
.app { width: 1920px; height: 1080px; display: flex; flex-direction: column; overflow: hidden; }
.app > * { flex: none; }

/* title bar and menu */
.titlebar { height: 28px; display: flex; align-items: center; padding-left: 2px; background: #fff; color: #000; }
.window-title { margin-left: 5px; font-size: 15px; letter-spacing: -.27px; white-space: nowrap; }
.window-buttons { margin-left: auto; margin-right: 19px; }
.menubar { height: 26px; display: flex; align-items: center; padding: 0 0 1px 9px; gap: 17.600px; font-size: 15px; letter-spacing: -.42px; color: #222; border-bottom: 1px solid #d0d0d0; }

/* dark toolbar */
.toolbar { height: 70px; background: #2a2e30; border-bottom: 2px solid #1a1b1c; }
.project-name { height: 34px; padding-left: 15px; line-height: 34px; font-size: 17px; letter-spacing: .62px; color: #eee; }
.tools { display: flex; height: 32px; align-items: center; }
.tools-left { width: 721px; padding-left: 16px; display: flex; align-items: center; gap: 11px; }
.tools-left .sep { margin-left: -10px; }
.tools-left svg + .sep { margin-left: 0; }
.tools-left svg:first-child { margin-right: -11px; }
.sep { width: 1px; height: 22px; background: #5c5f60; flex: none; }
.tools-edit { display: flex; align-items: center; width: 879px; }
.tools-edit .sep { margin: 0 5px 0 4px; }
.tool { width: 30.300px; display: flex; justify-content: center; }
.tool-search { width: 38px; }
.tool-clear { width: 26px; }
.tools-right { display: flex; align-items: center; }
.quick-add { width: 151px; height: 24px; padding-left: 5px; border-radius: 3px; background: #606466; color: #eee; display: flex; align-items: center; font-size: 15.500px; margin-right: 9px; letter-spacing: -.1px; }
.quick-add span { margin-left: 7px; }
.ui-library { margin-right: 10px; }
.tools-right .sep { margin-right: 7px; }
.notes-icon { margin: 0 10px; }
.tools-right .notes-icon + .sep { margin-right: 12px; }

/* category tabs */
.tabs { height: 38px; display: flex; gap: 3.300px; padding: 5px 0 0 488px; background: #e0e0e0; border-bottom: 1px solid #bdbdbd; }
.tab { height: 24px; padding: 0; border: 1px solid #b5b5b5; border-radius: 3px; background: #f5f5f5; box-shadow: 0 1px 1px #aaa; font: 14px/21px "Open Sans", sans-serif; letter-spacing: .25px; color: #333; text-align: center; }
.tab.active { background: #cfcfcf; border-color: #a8a8a8; box-shadow: inset 0 2px 2px #aaa; }
.w-all { width: 39px; } .w-assets { width: 67px; } .w-big { width: 40px; } .w-buttons { width: 73px; } .w-common { width: 85px; }
.w-containers { width: 96px; } .w-forms { width: 66px; } .w-icons { width: 58px; } .w-ios { width: 44px; } .w-layout { width: 67px; }
.w-markup { width: 71.500px; } .w-media { width: 60.500px; } .w-symbols { width: 80px; } .w-text { width: 52px; }

/* component library */
.library { height: 114px; padding-top: 6px; display: flex; background: #ededed; border-bottom: 1px solid #bdbdbd; }
.library figure { margin: 0; width: 113.700px; display: flex; flex-direction: column; align-items: center; }
.library figcaption { font-size: 13px; line-height: 18px; color: #111; white-space: nowrap; }
.library svg { overflow: visible; margin-left: -2px; }
.soft { fill: #fff; filter: drop-shadow(0 1px 1px rgba(0,0,0,.35)); }
.lift { filter: drop-shadow(0 1px 1px rgba(0,0,0,.4)); }
.lift2 { filter: drop-shadow(1px 1px 1.500px rgba(0,0,0,.6)); }
.micro { font: 5.500px "DejaVu Serif", serif; fill: #333; }
.micro.key { font-size: 5px; }
.micro.picker { fill: #777; }
.pointy { font-size: 15px; fill: #555; }

/* workspace */
.workspace { height: 721px; display: flex; }
.mockups { width: 241px; border-right: 1px solid #bdbdbd; background: #ededed; display: flex; flex-direction: column; }
.mockups-head { height: 38px; display: flex; align-items: center; padding: 0 11px 3px 16px; background: #e0e0e0; border-bottom: 1px solid #bdbdbd; font-size: 16px; letter-spacing: .42px; }
.mockups-head > svg { margin-left: 8px; }
.mockups-head .view-icons { margin-left: auto; }
.mockups-body { flex: 1; min-height: 0; display: flex; }
.card-list { width: 223px; overflow: hidden; }
.slot { height: 180px; padding: 7px 0 0 15px; }
.slot:first-child { height: 179px; padding-top: 6px; }
.slot.selected { background: #2273c6; }
.card { width: 201px; height: 166px; background: #fff; border: 1px solid #aaa; }
.thumb { overflow: hidden; }
.card-label { display: flex; align-items: center; height: 30px; font-size: 15.500px; letter-spacing: -.15px; color: #333; }
.card-label span { display: block; width: 164px; padding-left: 32px; text-align: center; white-space: nowrap; margin-right: 11px; flex: none; }

/* scrollbars */
.vscroll { width: 17px; background: #ededed; display: flex; flex-direction: column; align-items: center; padding: 8px 0 8px; }
.arrow { width: 0; height: 0; border: 5px solid transparent; flex: none; }
.arrow.up { border-bottom-color: #606060; border-top: 0; }
.arrow.down { border-top-color: #606060; border-bottom: 0; margin-top: auto; }
.arrow.left { border-right-color: #606060; border-left: 0; }
.arrow.right { border-left-color: #606060; border-right: 0; margin-left: auto; }
.bar { background: #666; border-radius: 5px; flex: none; }
.bar-mockups { width: 10px; height: 387px; margin-top: 6px; }
.bar-canvas { width: 9px; height: 372px; margin-top: 17px; }
.bar-h { height: 10px; width: 940px; margin-left: 6px; }
.canvas { width: 1359px; display: flex; flex-direction: column; }
.canvas-top { display: flex; height: 704px; }
.hscroll { height: 17px; background: #ededed; display: flex; align-items: center; padding-left: 8px; }
.corner { width: 17px; height: 17px; margin-left: 9px; background: #dcdcdc; }

/* wireframe typography */
.slab { font-family: "DejaVu Serif", serif; font-size: 15px; fill: #3c3c3c; transform: translateY(-.6px); }
.slab.dark { fill: #222; }
.slab.link { fill: #3a7ce0; }
.slab.cal-title { font-size: 11.500px; fill: #222; }
.slab.cal { font-size: 11px; fill: #222; }
.off { fill: #ccc; }
.slab.small { font-size: 12.500px; }
.logo { font-family: "Liberation Serif", serif; font-size: 62px; fill: #0b2a5c; stroke: #0b2a5c; stroke-width: .6px; }
.logo-small { font-size: 42px; stroke-width: .2px; }
.tiny-logo { font-size: 8px; stroke-width: .2px; }
.social { font: bold 20px "Liberation Sans", sans-serif; fill: #2e2e2e; }

/* inspector */
.inspector { width: 320px; border-left: 1px solid #b5b5b5; background: #ededed; display: flex; flex-direction: column; }
.inspector h2 { margin: 0; height: 38px; padding-left: 16px; line-height: 36px; font-size: 16px; font-weight: 400; letter-spacing: .53px; background: #e0e0e0; border-bottom: 1px solid #bdbdbd; }
.notes { padding: 14px 0 0 16px; flex: 1; font-size: 16px; }
.notes h3 { margin: 0; font-size: 16px; font-weight: 400; line-height: 22px; letter-spacing: .4px; }
.notes p { margin: 18px 0 0; line-height: 22px; letter-spacing: .58px; }
.versions { margin: 0 14px 0 14px; height: 161px; border-top: 1px solid #aaa; }
.versions-head { height: 49px; display: flex; align-items: center; padding: 0 0 5px 3px; font-size: 16px; letter-spacing: .38px; }
.versions-head b { margin-left: 8px; width: 23px; height: 23px; border: 1px solid #aaa; border-radius: 50%; background: #f7f7f7; text-align: center; line-height: 21px; font-size: 15px; letter-spacing: 0; }
.versions-head svg { margin-left: auto; }
.version { height: 25px; line-height: 24px; padding-left: 3px; font-size: 15px; letter-spacing: .37px; }
.version.current { background: #2273c6; color: #fff; font-weight: 700; letter-spacing: .83px; }

/* trial strip */
.trial { height: 33px; display: flex; align-items: center; padding: 0 7px 1px 9px; background: #006fbc; color: #e8f2fa; font-size: 15px; letter-spacing: .24px; white-space: nowrap; }
.trial b { letter-spacing: 1.450px; color: #fff; width: 72px; }
.dot { width: 20px; text-align: center; font-weight: 700; }
.trial .t-help { letter-spacing: .3px; }
.trial .t-key { margin-left: auto; letter-spacing: .15px; }
.trial .t-register { margin: 0 10px 0 5px; letter-spacing: .4px; }
.trial u { text-underline-offset: 2px; }
.buy { width: 181px; height: 26px; padding: 0; border: 1px solid #aac; border-radius: 2px; background: #f7f7f7; font: 16px/22px "Open Sans", sans-serif; letter-spacing: .42px; color: #222; }

/* taskbar */
.taskbar { height: 50px; display: flex; align-items: center; background: #040506; color: #fff; }
.start { width: 60px; padding-left: 20px; }
.search { width: 430px; height: 50px; background: #333; display: flex; align-items: center; padding: 0 19px 0 11px; color: #9b9b9b; font-size: 18px; letter-spacing: -.43px; }
.search span { margin-left: 6px; }
.mic { margin-left: auto; }
.taskview { width: 66px; padding-left: 18px; }
.grip { width: 4px; height: 26px; border: 1px solid #3a3a3a; border-width: 0 1px; margin-right: 13px; }
.task { width: 62px; height: 50px; display: flex; align-items: center; justify-content: center; flex: none; background: linear-gradient(#7cc4f0, #7cc4f0) center bottom / 0 3px no-repeat; }
.task.open { background-size: 51px 3px; }
.task.focused { background-color: #3b3b3b; background-size: 61px 3px; }
.amazon { overflow: visible; }
.amz { font: bold 28px "Liberation Sans", sans-serif; fill: #000; }
.word { font: bold 13px "Open Sans", sans-serif; fill: #fff; }
.tray { margin-left: auto; width: 415px; display: flex; align-items: center; }
.tr-tool { width: 55px; }
.tr-tool svg { overflow: visible; }
.tr { width: 40.300px; display: flex; justify-content: center; }
.tr-kbd { width: 48px; }
.clock { width: 85px; display: flex; flex-direction: column; align-items: center; font-size: 15px; line-height: 23px; letter-spacing: -.5px; }
.tr-note { width: 59px; height: 50px; align-items: center; border-right: 1px solid #444; }
.badge { font: 13px "Open Sans", sans-serif; fill: #fff; }
```
